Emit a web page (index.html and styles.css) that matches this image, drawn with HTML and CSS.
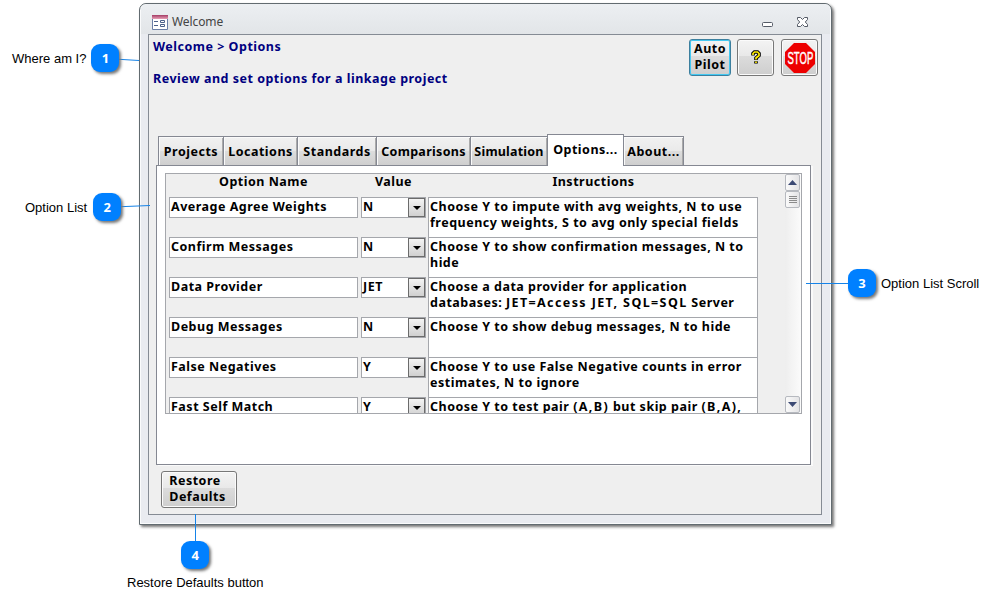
FILE: index.html
```html
<!DOCTYPE html>
<html lang="en">
<head>
<meta charset="utf-8">
<title>Welcome</title>
<link rel="stylesheet" href="styles.css">
</head>
<body>
<main class="window">
  <header class="titlebar">
    <svg class="form-icon" width="16" height="15" viewBox="0 0 16 15"><defs><linearGradient id="pink" x2="0" y2="1"><stop stop-color="#a33b64"/><stop offset="1" stop-color="#e7a0b7"/></linearGradient></defs><path fill="#fff" stroke="#6b7fa6" d="M.5.5h15v14H.5z"/><path fill="url(#pink)" d="M0 0h16v4H0z"/><path stroke="#4d628b" fill="none" d="M2 6.500h4M2 10.500h4M8.500 5.500h4v2h-4zM8.500 9.500h4v2h-4z"/></svg>
    <span class="title">Welcome</span>
    <svg class="window-controls" width="48" height="12" viewBox="0 0 48 12"><rect x="1.500" y="6.500" width="10" height="4" rx="1" fill="#fff" stroke="#555b66"/><path fill="#fff" stroke="#555b66" d="M36.500 1.500h3l2 2 2-2h3v2l-2.200 2.500 2.200 2.500v2h-3l-2-2-2 2h-3v-2l2.200-2.500-2.200-2.500z"/></svg>
  </header>
  <section class="client">
    <div class="heading">
      <div class="crumbs"><p>Welcome &gt; Options</p><p>Review and set options for a linkage project</p></div>
      <div class="tools">
        <button class="button auto">Auto<br>Pilot</button>
        <button class="button square"><svg width="10" height="15" viewBox="0 0 10 15"><path fill="none" stroke="#000" stroke-width="3.600" d="M2 5.500V3.500L3.500 2h3L8 3.500v2L5 8v2M5 11.200v2.300"/><path fill="none" stroke="#ffed00" stroke-width="1.700" d="M2 5V3.500L3.500 2h3L8 3.500v2L5 8v1.500M5 11.500v1.500"/></svg></button>
        <button class="button square"><svg width="30" height="30" viewBox="0 0 30 30"><path fill="#ed0000" d="M9 0h12l9 9v12l-9 9H9l-9-9V9z"/><g transform="translate(2.500 21) scale(.56 1)"><text class="stop">STOP</text></g></svg></button>
      </div>
    </div>
    <nav class="tabs">
      <span class="tab projects">Projects</span><span class="tab locations">Locations</span><span class="tab standards">Standards</span><span class="tab comparisons">Comparisons</span><span class="tab simulation">Simulation</span><span class="tab selected">Options...</span><span class="tab about">About...</span>
    </nav>
    <div class="page">
      <div class="list">
        <div class="rows">
          <div class="row header"><span>Option Name</span><span>Value</span><span>Instructions</span></div>
          <div class="row"><div class="field">Average Agree Weights</div><div class="combo">N<i></i></div><div class="help">Choose Y to impute with avg weights, N to use<br>frequency weights, S to avg only special fields</div></div>
          <div class="row"><div class="field">Confirm Messages</div><div class="combo">N<i></i></div><div class="help">Choose Y to show confirmation messages, N to<br>hide</div></div>
          <div class="row"><div class="field">Data Provider</div><div class="combo">JET<i></i></div><div class="help">Choose a data provider for application<br>databases: <span class="codes">JET=Access JET, SQL=SQL</span> Server</div></div>
          <div class="row"><div class="field">Debug Messages</div><div class="combo">N<i></i></div><div class="help">Choose Y to show debug messages, N to hide</div></div>
          <div class="row"><div class="field">False Negatives</div><div class="combo">Y<i></i></div><div class="help">Choose Y to use False Negative counts in error<br>estimates, N to ignore</div></div>
          <div class="row"><div class="field">Fast Self Match</div><div class="combo">Y<i></i></div><div class="help">Choose Y to test pair <span class="codes">(A,B)</span> but skip pair <span class="codes">(B,A),</span></div></div>
        </div>
        <div class="scrollbar">
          <span class="cap"><svg width="9" height="5"><path fill="#3c4a74" d="M0 5l4.500-5L9 5z"/></svg></span>
          <span class="cap"><svg width="8" height="8"><path stroke="#8b8b8b" d="M0 .5h8M0 2.500h8M0 4.500h8M0 6.500h8"/></svg></span>
          <span class="cap down"><svg width="9" height="5"><path fill="#3c4a74" d="M0 0h9L4.500 5z"/></svg></span>
        </div>
      </div>
    </div>
    <button class="button restore">Restore<br>Defaults</button>
  </section>
</main>
<svg class="leaders" width="997" height="606"><path d="M119 59.300l20 1.200M121 206.700l29-1.200M806 283.500h43M195.500 514v29"/></svg>
<div class="callout one"><span>Where am I?</span><b>1</b></div>
<div class="callout two"><span>Option List</span><b>2</b></div>
<div class="callout three"><b>3</b><span>Option List Scroll</span></div>
<div class="callout four"><b>4</b><span>Restore Defaults button</span></div>
</body>
</html>
```
FILE: styles.css
```css
* { box-sizing: border-box; }
body {
  margin: 0;
  width: 997px;
  height: 606px;
  overflow: hidden;
  position: relative;
  background: #fff;
  font: bold 12.5px/16px "Noto Sans", sans-serif;
  letter-spacing: .5px;
  color: #000;
  padding: 3px 0 0 139px;
}
svg { display: block; }
p { margin: 0; }
.window {
  width: 693px;
  height: 522px;
  border: 1px solid #626b70;
  border-radius: 7px 7px 0 0;
  background: #e9ebf0;
  box-shadow: inset 0 0 0 1px #fafbfc, 2px 2px 3px #777;
  padding: 0 8px;
}
.titlebar {
  height: 30px;
  display: flex;
  align-items: center;
  margin: 0 -7px;
  padding: 6px 21px 0 11px;
  background: linear-gradient(#eceff2, #e2e5e8);
  border-radius: 6px 6px 0 0;
}
.title {
  font: 12px/16px "Noto Sans", sans-serif;
  letter-spacing: -.1px;
  color: #444;
  margin-left: 4px;
}
.window-controls { margin-left: auto; }
.client {
  width: 674px;
  height: 481px;
  border: 1px solid #858b94;
  background: #efefef;
  padding: 4px 3px 0 7px;
}
.heading { display: flex; height: 96px; }
.crumbs { color: #000080; margin-left: -3px; }
.crumbs p + p { margin-top: 16px; }
.tools { display: flex; gap: 6px; margin-left: auto; }
.button {
  display: flex;
  align-items: center;
  justify-content: center;
  height: 37px;
  padding: 0 0 2px;
  border: 1px solid #777;
  border-radius: 3px;
  background: linear-gradient(#f3f3f3 0, #e9e9e9 45%, #dcdcdc 46%, #cecece);
  box-shadow: inset 0 0 0 1px #fbfbfb;
  font: inherit;
  color: #000;
  letter-spacing: inherit;
}
.auto { width: 42px; border-color: #3c7f9e; box-shadow: inset 0 0 0 1px #43c8f1; }
.square { width: 37px; padding: 0; }
.square + .square { margin-left: 1px; }
.stop { font: 17px "Liberation Sans", sans-serif; fill: #fff; stroke: #fff; stroke-width: .5; letter-spacing: 0; }
.tabs { display: flex; height: 31px; align-items: flex-end; margin: 0 0 -1px 2px; position: relative; }
.tab {
  height: 30px;
  display: flex;
  align-items: center;
  justify-content: center;
  border: 1px solid #858892;
  border-left-width: 0;
  background: linear-gradient(#f1f1f1 0, #eaeaea 48%, #dddddd 50%, #cfcfcf);
  box-shadow: inset 1px 1px #fafafa, inset -1px 0 #aaa;
  padding-top: 1px;
}
.projects { width: 66px; border-left-width: 1px; }
.locations { width: 74px; }
.standards { width: 79px; }
.comparisons { width: 94px; letter-spacing: .3px; }
.simulation { width: 77px; letter-spacing: .2px; }
.selected { width: 77px; height: 32px; margin-left: -1px; padding-bottom: 2px; border-left-width: 1px; border-bottom: 0; background: #fff; box-shadow: none; }
.about { width: 60px; }
.page {
  width: 655px;
  height: 300px;
  border: 1px solid #858892;
  background: #fff;
  box-shadow: 2px 1px #fafafa;
  padding: 7px 8px;
}
.list {
  width: 637px;
  height: 241px;
  border: 1px solid #a5a7ac;
  background: #efefef;
  display: flex;
  justify-content: space-between;
  overflow: hidden;
}
.rows { width: 592px; }
.row { display: grid; grid-template-columns: 189px 65px 329px; column-gap: 3px; padding-left: 3px; height: 40px; }
.row.header { height: 23px; text-align: center; }
.field, .combo { height: 21px; border: 1px solid #a5a7ac; background: #fff; white-space: nowrap; }
.field, .combo, .help { padding: 1px; }
.combo { display: flex; justify-content: space-between; }
.combo i {
  width: 17px;
  height: 19px;
  margin: -1px -1px 0 0;
  border: 1px solid #6b6b6b;
  background: linear-gradient(#f4f4f4, #d0d0d0);
  display: flex;
  align-items: center;
  justify-content: center;
}
.combo i::after { content: ""; border: 4px solid transparent; border-top-color: #000; border-bottom: 0; }
.help { height: 41px; margin-left: -1px; border: 1px solid #a5a7ac; background: #fff; white-space: nowrap; }
.codes { letter-spacing: 1.4px; }
.scrollbar { width: 16px; display: flex; flex-direction: column; background: linear-gradient(90deg, #eee, #fbfbfb); }
.cap { width: 15px; height: 17px; flex: none; border: 1px solid #b6b9bf; border-radius: 2px; background: linear-gradient(90deg, #fafafa, #e4e4e6); display: flex; align-items: center; justify-content: center; }
.down { margin-top: auto; }
.restore { width: 76px; margin: 6px 0 0 5px; padding-right: 3px; text-align: left; }
.leaders { position: absolute; inset: 0; }
.leaders path { stroke: #1583e8; fill: none; }
.callout {
  position: absolute;
  display: flex;
  align-items: center;
  font: 13px/16px "Liberation Sans", sans-serif;
  letter-spacing: 0;
  white-space: nowrap;
}
.callout span { padding-top: 1px; }
.callout b {
  width: 28px;
  height: 28px;
  border-radius: 9px;
  background: #0080ff;
  box-shadow: 2px 2px 3px #777;
  color: #fff;
  font: bold 13px/28px "Noto Sans", sans-serif;
  text-align: center;
}
.one { left: 12px; top: 44px; gap: 5px; }
.two { left: 25px; top: 193px; gap: 6px; }
.three { left: 848px; top: 269px; gap: 5px; }
.four { left: 127px; top: 541px; flex-direction: column; gap: 5px; }
```
